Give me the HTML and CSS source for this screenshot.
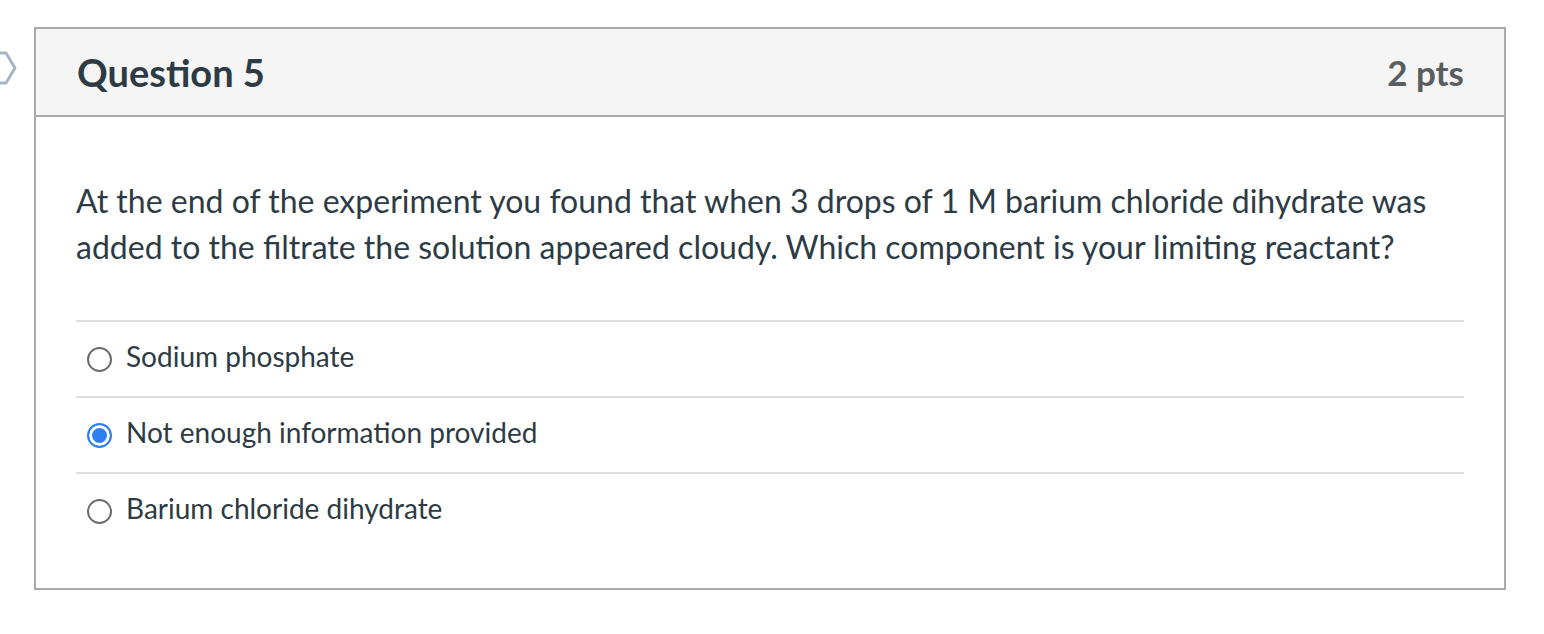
FILE: index.html
```html
<!DOCTYPE html>
<html>
<head>
<meta charset="utf-8">
<link rel="stylesheet" href="styles.css">
</head>
<body>
<div class="page">
  <svg class="nav-chevron" width="18" height="36" viewBox="0 0 18 36">
    <path d="M-6 3 H6 L15 18 L6 33 H-6" fill="none" stroke="#a3b6c8" stroke-width="3" stroke-linejoin="round"/>
  </svg>
  <div class="question">
    <div class="q-header">
      <h3 class="q-title">Question 5</h3>
      <div class="q-pts">2 pts</div>
    </div>
    <div class="q-body">
      <p class="q-text">At the end of the experiment you found that when 3 drops of 1 M barium chloride dihydrate was added to the filtrate the solution appeared cloudy. Which component is your limiting reactant?</p>
      <div class="answers">
        <label class="answer"><span class="radio"></span><span class="a-text">Sodium phosphate</span></label>
        <label class="answer"><span class="radio checked"></span><span class="a-text">Not enough information provided</span></label>
        <label class="answer"><span class="radio"></span><span class="a-text">Barium chloride dihydrate</span></label>
      </div>
    </div>
  </div>
</div>
</body>
</html>
```
FILE: styles.css
```css
* { box-sizing: border-box; }
html, body { margin: 0; padding: 0; background: #fff; }
body { font-family: Lato, "Noto Sans", sans-serif; color: #2d3b45; }
.page {
  position: relative;
  padding: 27px 38px 0 34px;
}
.nav-chevron {
  position: absolute;
  left: 0;
  top: 50px;
}
.question {
  width: 1472px;
  border: 2px solid #aaaaaa;
}
.q-header {
  height: 88px;
  background: #f5f5f5;
  border-bottom: 2px solid #aaaaaa;
  display: flex;
  align-items: center;
  justify-content: space-between;
  padding: 0 40px 0 41px;
}
.q-title {
  margin: 0;
  font-size: 38px;
  font-weight: 700;
  color: #2d3b45;
}
.q-pts {
  font-size: 35px;
  font-weight: 700;
  color: #5a5d60;
}
.q-body {
  padding: 61px 40px 40px 40px;
}
.q-text {
  margin: 0;
  font-size: 32px;
  line-height: 46px;
  color: #2d3b45;
}
.answers {
  margin-top: 50px;
}
.answer {
  display: flex;
  align-items: center;
  height: 76px;
  border-top: 2px solid #dddddd;
  padding-left: 11px;
  gap: 14px;
}
.radio {
  width: 25px;
  height: 25px;
  border-radius: 50%;
  border: 2px solid #6b6b6b;
  flex: none;
  background: #fff;
}
.radio.checked {
  border: 2px solid #2f7ff0;
  background: #2f7ff0;
  box-shadow: inset 0 0 0 3px #fff;
}
.a-text {
  font-size: 28px;
  color: #2d3b45;
  margin-top: -7px;
}
```
